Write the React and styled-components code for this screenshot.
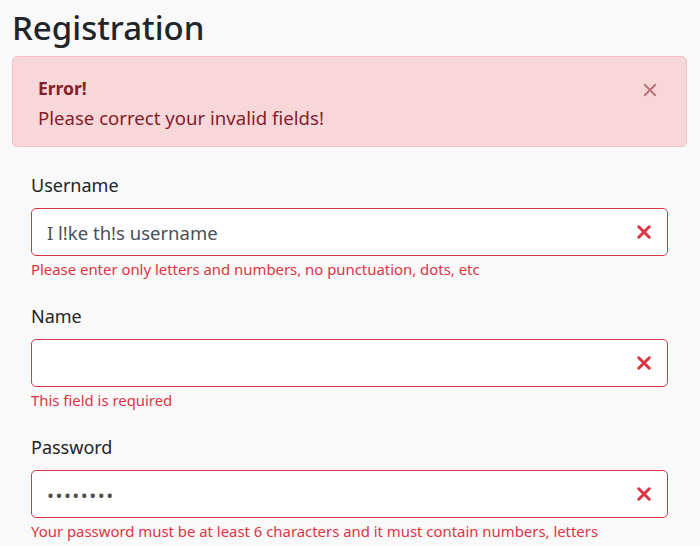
import React from 'react';
import styled, { createGlobalStyle } from 'styled-components';

const GlobalStyle = createGlobalStyle`
  html, body {
    margin: 0;
    padding: 0;
    background: #f9f9fa;
  }
  body {
    font-family: "Noto Sans", "Open Sans", sans-serif;
    color: #212529;
  }
`;

const Page = styled.div`
  padding: 0 13px 0 12px;
`;

const Title = styled.h1`
  margin: 0;
  padding-top: 5px;
  font-size: 33px;
  font-weight: 500;
  line-height: 45px;
  color: #212529;
`;

const Alert = styled.div`
  margin-top: 6px;
  background: #f8d7da;
  border: 1px solid #f5c2c7;
  border-radius: 5px;
  color: #842029;
  padding: 16px 25px 13px 25px;
  display: flex;
  align-items: flex-start;
  justify-content: space-between;
`;

const AlertBody = styled.div`
  display: flex;
  flex-direction: column;
`;

const AlertTitle = styled.strong`
  font-size: 17.5px;
  font-weight: 700;
  line-height: 30px;
`;

const AlertText = styled.span`
  font-size: 18.6px;
  line-height: 30px;
`;

const Close = styled.button`
  border: 0;
  background: none;
  padding: 0;
  margin-top: 10px;
  margin-right: 4px;
  color: #842029;
  opacity: 0.55;
  cursor: pointer;
  display: flex;
`;

const Form = styled.form`
  padding: 26px 19px 0 19px;
  display: flex;
  flex-direction: column;
  gap: 25px;
`;

const Group = styled.div`
  display: flex;
  flex-direction: column;
`;

const Label = styled.label`
  font-size: 18px;
  line-height: 24px;
  margin-bottom: 11px;
  color: #212529;
`;

const InputWrap = styled.div`
  position: relative;
  display: flex;
`;

const Input = styled.input`
  box-sizing: border-box;
  width: 100%;
  height: 48px;
  padding: 0 40px 0 15px;
  font-family: inherit;
  font-size: 18.5px;
  color: #495057;
  background: #fff;
  border: 1px solid #dc3545;
  border-radius: 5px;
  outline: none;
  letter-spacing: ${({ type }) => (type === 'password' ? '1.5px' : 'normal')};
`;

const InvalidIcon = styled.span`
  position: absolute;
  right: 17px;
  top: 50%;
  transform: translateY(-50%);
  display: flex;
  color: #dc3545;
`;

const Feedback = styled.div`
  font-size: 14.9px;
  line-height: 20px;
  margin-top: 3px;
  color: #dc3545;
`;

const Cross = ({ size, stroke }) => (
  <svg width={size} height={size} viewBox="0 0 12 12" fill="none">
    <path d="M1.5 1.5 L10.5 10.5 M10.5 1.5 L1.5 10.5" stroke="currentColor" strokeWidth={stroke} strokeLinecap="round" />
  </svg>
);

const fields = [
  {
    id: 'username',
    label: 'Username',
    type: 'text',
    value: 'I l!ke th!s username',
    error: 'Please enter only letters and numbers, no punctuation, dots, etc',
  },
  { id: 'name', label: 'Name', type: 'text', value: '', error: 'This field is required' },
  {
    id: 'password',
    label: 'Password',
    type: 'password',
    value: 'password',
    error: 'Your password must be at least 6 characters and it must contain numbers, letters',
  },
];

const App = () => {
  return (
    <>
      <GlobalStyle />
      <Page>
        <Title>Registration</Title>
        <Alert>
          <AlertBody>
            <AlertTitle>Error!</AlertTitle>
            <AlertText>Please correct your invalid fields!</AlertText>
          </AlertBody>
          <Close type="button" aria-label="Close">
            <Cross size={14} stroke={1.6} />
          </Close>
        </Alert>
        <Form onSubmit={(e) => e.preventDefault()}>
          {fields.map((f) => (
            <Group key={f.id}>
              <Label htmlFor={f.id}>{f.label}</Label>
              <InputWrap>
                <Input id={f.id} type={f.type} defaultValue={f.value} />
                <InvalidIcon>
                  <Cross size={14} stroke={2.6} />
                </InvalidIcon>
              </InputWrap>
              <Feedback>{f.error}</Feedback>
            </Group>
          ))}
        </Form>
      </Page>
    </>
  );
};

export default App;
